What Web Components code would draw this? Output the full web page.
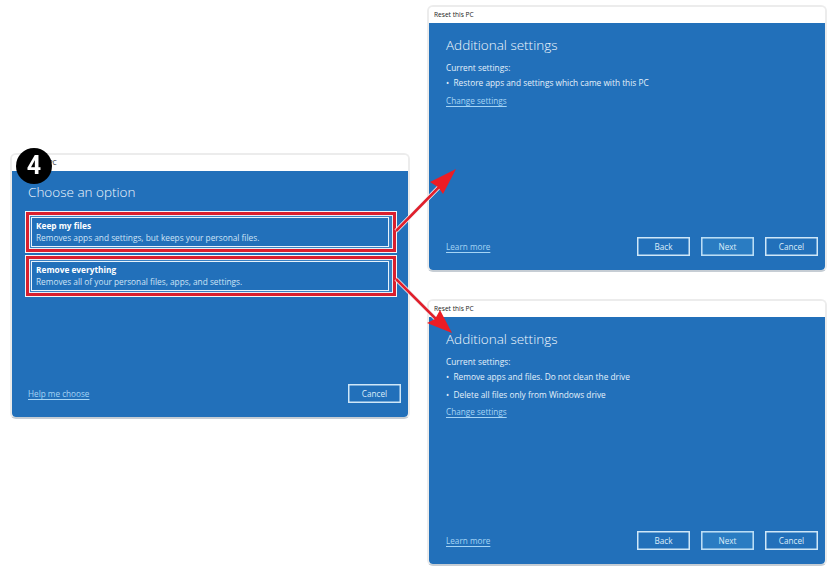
<!DOCTYPE html>
<html lang="en">
<head>
<meta charset="utf-8">
<title>Reset this PC</title>
<style>
  html, body { margin: 0; background: #fff; }
  body { width: 837px; height: 574px; overflow: hidden; position: relative; font-family: "Open Sans", "Liberation Sans", sans-serif; }
  .page { display: flex; align-items: flex-start; gap: 17px; padding: 5px 0 0 10px; filter: blur(.3px); }
  .right { display: flex; flex-direction: column; gap: 27px; --pad-left: 17px; --head-top: 13px; }
  .left { margin-top: 148px; position: relative; }
  .options { display: flex; flex-direction: column; gap: 4px; margin-top: 10px; }
</style>
</head>
<body>

<template id="reset-window-tpl">
  <style>
    :host { display: block; width: 400px; box-sizing: border-box; border: 2px solid #ececec; border-bottom-color: #c6cdd4; border-radius: 6px; background: #fff; overflow: hidden; }
    .titlebar { height: 16px; line-height: 15px; padding-left: 5px; font-size: 6.6px; color: #222; background: #fff; }
    .body { height: var(--body-height, 247px); box-sizing: border-box; background: #2270ba; padding: 0 7px 14px var(--pad-left, 16px); display: flex; flex-direction: column; color: #e4f0fa; font-size: 8.3px; border-radius: 0 0 3px 3px; }
    h2 { margin: var(--head-top, 12px) 0 0; font-size: 13.5px; line-height: 19px; font-weight: 300; color: #f0f7fd; }
    .main { flex: 1; }
    .foot { display: flex; align-items: center; justify-content: space-between; }
    .btns { display: flex; gap: 11px; }
  </style>
  <div class="titlebar">Reset this PC</div>
  <div class="body">
    <h2><slot name="heading"></slot></h2>
    <div class="main"><slot></slot></div>
    <div class="foot">
      <slot name="link"></slot>
      <div class="btns"><slot name="buttons"></slot></div>
    </div>
  </div>
</template>

<template id="reset-option-tpl">
  <style>
    :host { display: block; box-sizing: border-box; height: 40px; width: 370px; margin-left: -2px; border: 3px solid #d91f2e; outline: 1px solid #f4f6f8; background: #3a80c2; box-shadow: inset 0 0 0 1px #e6eff8; padding: 2px 4px 2px 2px; }
    .inner { height: 100%; box-sizing: border-box; border: 1px solid #e8f3fb; background: #2270ba; padding: 2px 4px; line-height: 12px; font-size: 8.3px; color: #cfe4f6; }
    b { display: block; font-weight: 700; color: #fff; }
  </style>
  <div class="inner"><b><slot name="title"></slot></b><slot></slot></div>
</template>

<template id="reset-button-tpl">
  <style>
    :host { display: block; width: 53px; height: 19px; box-sizing: border-box; border: 1px solid #cfe7f8; box-shadow: inset 0 0 0 .5px #cfe7f8; line-height: 17px; text-align: center; font-size: 8.2px; color: #dcecf9; }
    :host([primary]) { background: #2a7cc2; border-color: #b9def6; }
  </style>
  <slot></slot>
</template>

<template id="reset-link-tpl">
  <style>
    :host { display: inline-block; font-size: 8.2px; color: #a5d4f5; text-decoration: underline; text-underline-offset: 2px; }
  </style>
  <slot></slot>
</template>

<template id="reset-bullets-tpl">
  <style>
    :host { display: block; margin-top: 7px; line-height: 11px; }
    .list { display: flex; flex-direction: column; gap: 6.5px; margin: 4px 0 6.5px; }
    .head { display: block; }
  </style>
  <div class="head"><slot name="head"></slot></div>
  <div class="list"><slot></slot></div>
  <slot name="link"></slot>
</template>

<template id="bullet-item-tpl">
  <style>
    :host { display: flex; }
    .dot { width: 7.5px; flex: none; }
  </style>
  <span class="dot">&bull;</span><span><slot></slot></span>
</template>

<template id="step-badge-tpl">
  <style>
    :host { position: absolute; left: 6px; top: -5px; width: 36px; height: 36px; border-radius: 50%; background: #000; color: #fff; display: flex; align-items: center; justify-content: center; font: 700 25px/36px Roboto, "Liberation Sans", sans-serif; }
  </style>
  <slot></slot>
</template>

<template id="flow-arrows-tpl">
  <style>
    :host { position: absolute; left: 0; top: 0; width: 837px; height: 574px; pointer-events: none; filter: blur(.3px); }
    svg { display: block; }
  </style>
  <svg width="837" height="574" viewBox="0 0 837 574">
    <path d="M396 231 L442 184 M396 279 L438 321" stroke="#f2f5f8" stroke-width="4.2" fill="none"/>
    <path d="M396 231 L442 184 M396 279 L438 321" stroke="#e0202c" stroke-width="2.6" fill="none"/>
    <path d="M456 169 L430 182 L438 187 L443 194 Z" fill="#ed1c24"/>
    <path d="M452 333 L427 323 L435 319 L440 310 Z" fill="#ed1c24"/>
  </svg>
</template>

<div class="page">
  <div class="left">
    <reset-window style="--body-height:246px">
      <span slot="heading">Choose an option</span>
      <div class="options">
        <reset-option><span slot="title">Keep my files</span>Removes apps and settings, but keeps your personal files.</reset-option>
        <reset-option><span slot="title">Remove everything</span>Removes all of your personal files, apps, and settings.</reset-option>
      </div>
      <reset-link slot="link">Help me choose</reset-link>
      <reset-button slot="buttons">Cancel</reset-button>
    </reset-window>
    <step-badge>4</step-badge>
  </div>
  <div class="right">
    <reset-window>
      <span slot="heading">Additional settings</span>
      <reset-bullets>
        <span slot="head">Current settings:</span>
        <bullet-item>Restore apps and settings which came with this PC</bullet-item>
        <reset-link slot="link">Change settings</reset-link>
      </reset-bullets>
      <reset-link slot="link">Learn more</reset-link>
      <reset-button slot="buttons">Back</reset-button>
      <reset-button slot="buttons" primary>Next</reset-button>
      <reset-button slot="buttons">Cancel</reset-button>
    </reset-window>
    <reset-window>
      <span slot="heading">Additional settings</span>
      <reset-bullets>
        <span slot="head">Current settings:</span>
        <bullet-item>Remove apps and files. Do not clean the drive</bullet-item>
        <bullet-item>Delete all files only from Windows drive</bullet-item>
        <reset-link slot="link">Change settings</reset-link>
      </reset-bullets>
      <reset-link slot="link">Learn more</reset-link>
      <reset-button slot="buttons">Back</reset-button>
      <reset-button slot="buttons" primary>Next</reset-button>
      <reset-button slot="buttons">Cancel</reset-button>
    </reset-window>
  </div>
</div>
<flow-arrows></flow-arrows>

<script>
  // every element just clones its template into an open shadow root
  const parts = {
    'reset-window': 'reset-window-tpl',
    'reset-option': 'reset-option-tpl',
    'reset-button': 'reset-button-tpl',
    'reset-link': 'reset-link-tpl',
    'reset-bullets': 'reset-bullets-tpl',
    'bullet-item': 'bullet-item-tpl',
    'step-badge': 'step-badge-tpl',
    'flow-arrows': 'flow-arrows-tpl'
  };
  Object.keys(parts).forEach(name => {
    const tpl = document.getElementById(parts[name]);
    customElements.define(name, class extends HTMLElement {
      constructor() {
        super();
        this.attachShadow({ mode: 'open' }).appendChild(tpl.content.cloneNode(true));
      }
    });
  });
</script>
</body>
</html>
